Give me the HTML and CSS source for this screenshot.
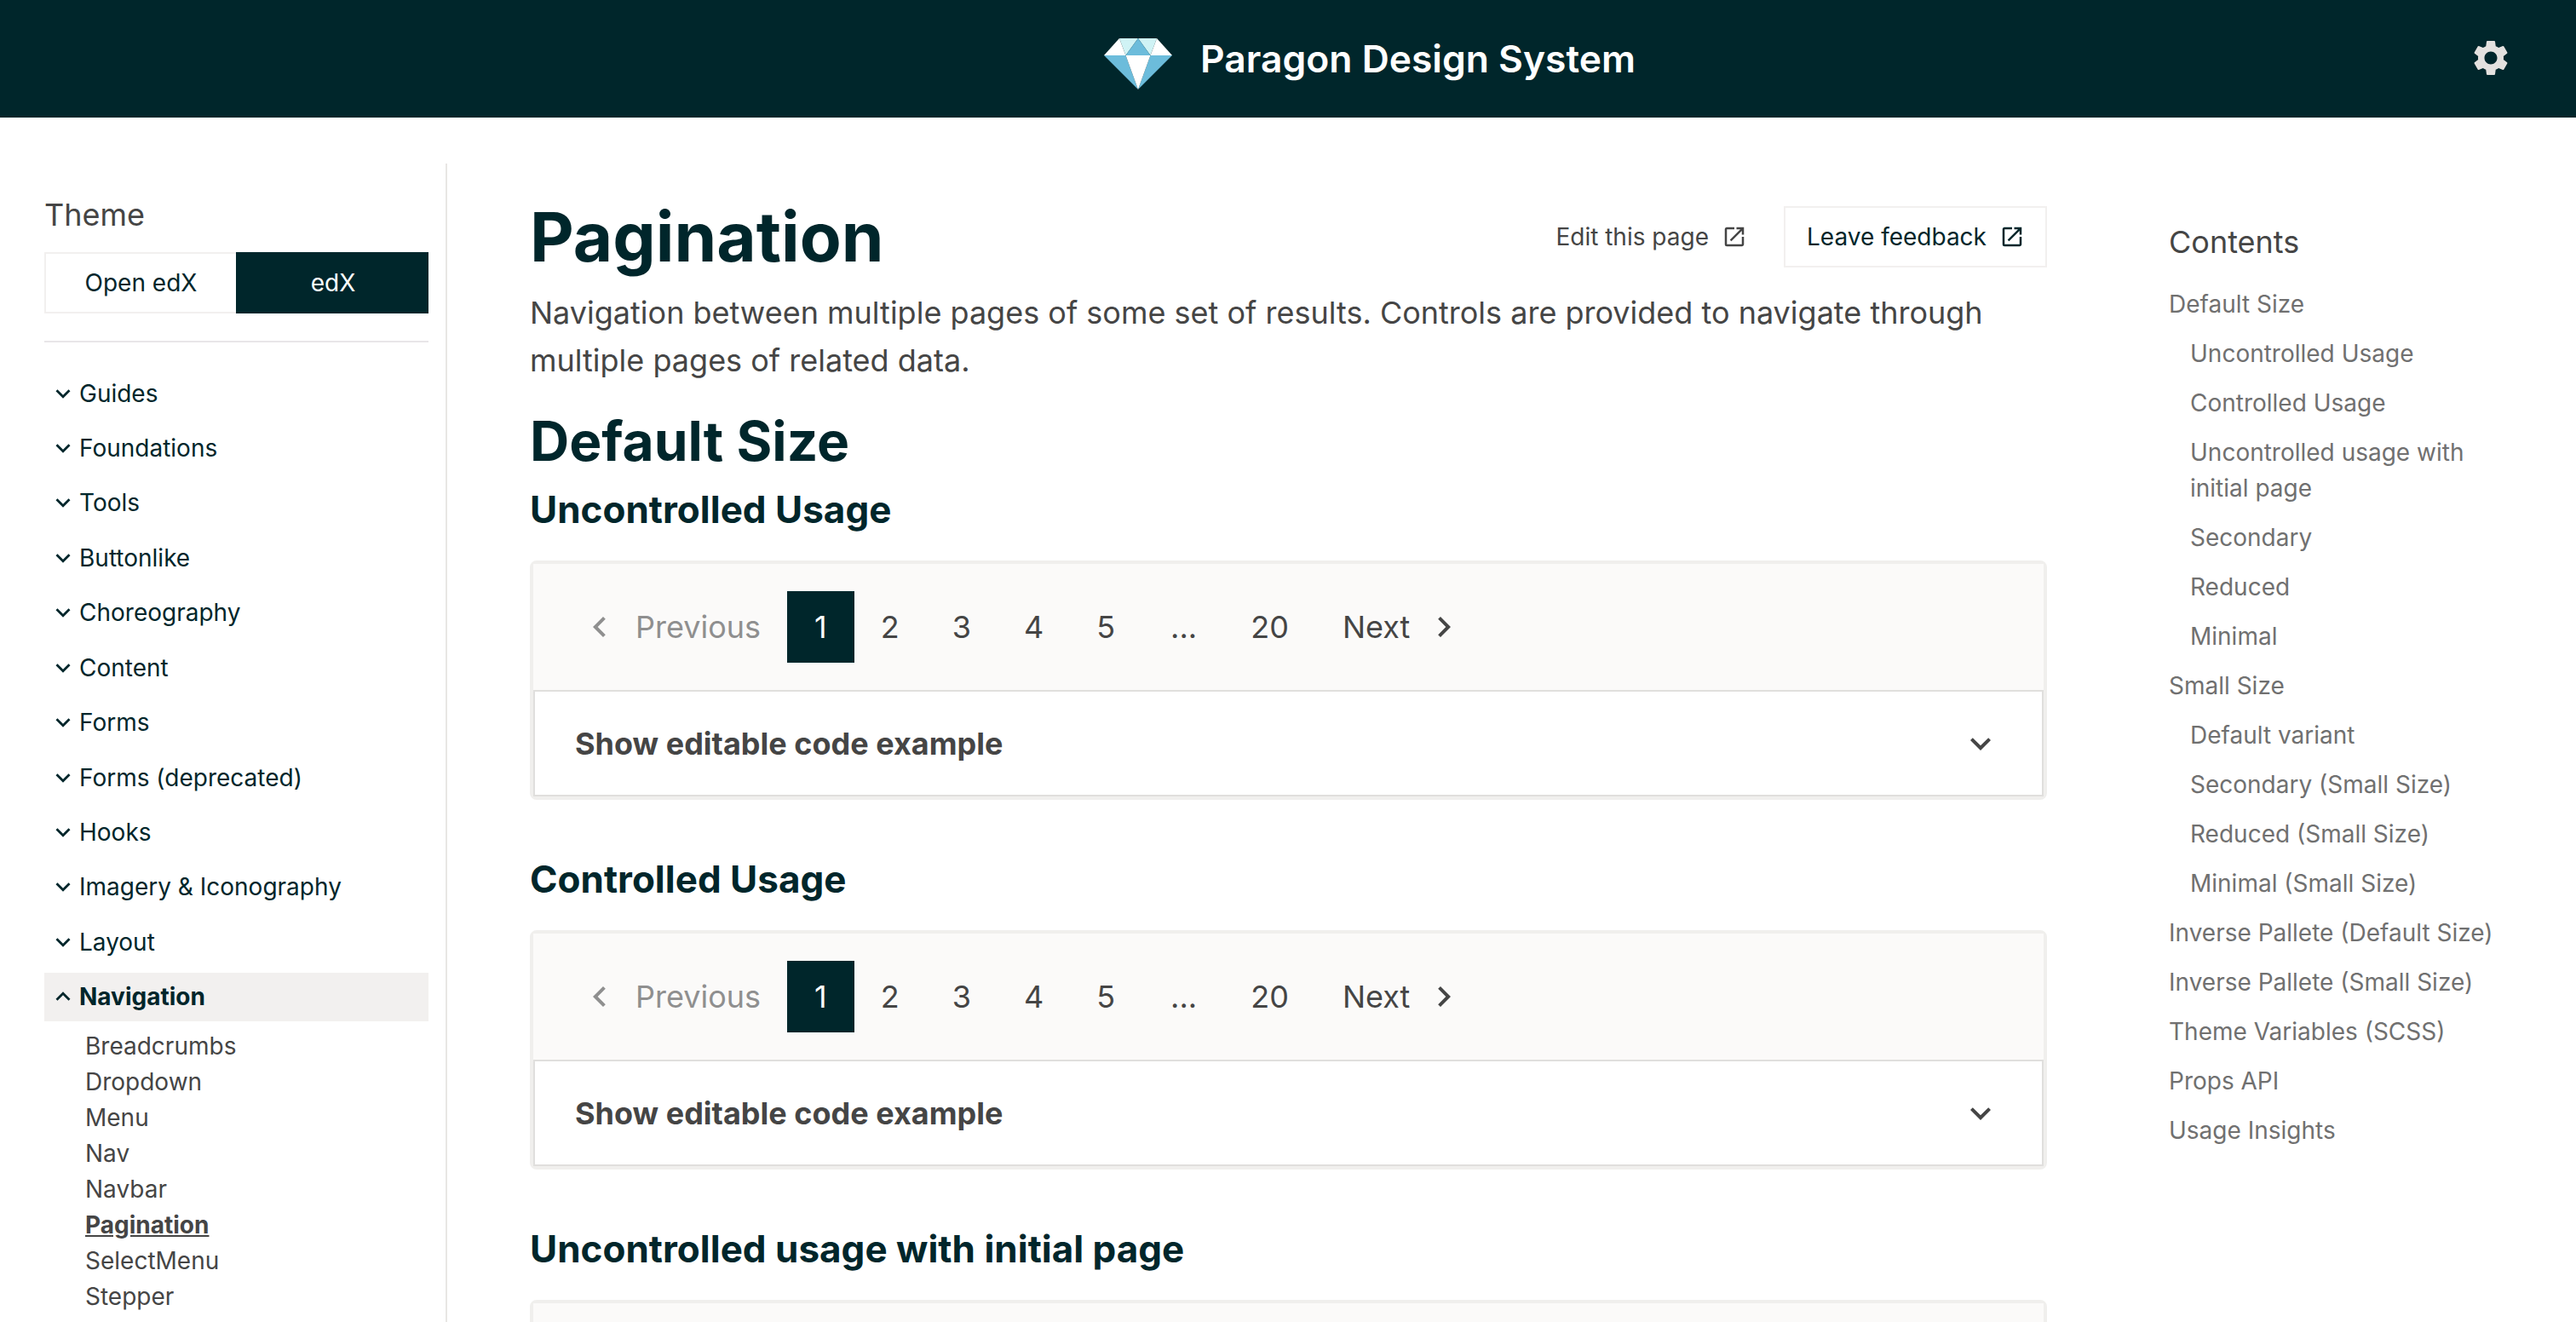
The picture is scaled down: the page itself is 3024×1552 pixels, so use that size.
FILE: index.html
```html
<!DOCTYPE html>
<html lang="en">

<head>
    <meta charset="UTF-8">
    <meta name="viewport" content="width=device-width, initial-scale=1.0">
    <title>Pagination - Paragon Design System</title>
    <link rel="stylesheet" href="styles.css">
</head>

<body>
    <svg class="icon-defs" width="0" height="0">
        <symbol id="i-down" viewBox="0 0 24 24"><path d="M16.59 8.59 12 13.17 7.41 8.59 6 10l6 6 6-6z"/></symbol>
        <symbol id="i-up" viewBox="0 0 24 24"><path d="M12 8l-6 6 1.41 1.41L12 10.83l4.59 4.58L18 14z"/></symbol>
        <symbol id="i-left" viewBox="0 0 24 24"><path d="M15.41 7.41 14 6l-6 6 6 6 1.41-1.41L10.83 12z"/></symbol>
        <symbol id="i-right" viewBox="0 0 24 24"><path d="M10 6 8.59 7.41 13.17 12l-4.58 4.59L10 18l6-6z"/></symbol>
        <symbol id="i-launch" viewBox="0 0 24 24"><path d="M19 19H5V5h7V3H5a2 2 0 0 0-2 2v14a2 2 0 0 0 2 2h14c1.1 0 2-.9 2-2v-7h-2v7zM14 3v2h3.59l-9.83 9.83 1.41 1.41L19 6.41V10h2V3h-7z"/></symbol>
    </svg>

    <header class="topbar">
        <div class="brand">
            <svg class="brand-logo" viewBox="0 0 80 60">
                <polygon points="18,0 40,0 25.5,20" fill="#d0f3f5"/>
                <polygon points="62,0 40,0 54.5,20" fill="#d0f3f5"/>
                <polygon points="40,0 25.5,20 54.5,20" fill="#6cbcdb"/>
                <polygon points="18,0 25.5,20 0,20" fill="#fff"/>
                <polygon points="62,0 54.5,20 80,20" fill="#fff"/>
                <polygon points="0,20 25.5,20 40,60" fill="#6cbcdb"/>
                <polygon points="80,20 54.5,20 40,60" fill="#6cbcdb"/>
                <polygon points="25.5,20 54.5,20 40,60" fill="#fff"/>
            </svg>
            <span class="brand-name">Paragon Design System</span>
        </div>
        <svg class="settings" viewBox="0 0 24 24"><path d="M19.14 12.94c.04-.3.06-.61.06-.94 0-.32-.02-.64-.07-.94l2.03-1.58a.49.49 0 0 0 .12-.61l-1.92-3.32a.488.488 0 0 0-.59-.22l-2.39.96c-.5-.38-1.03-.7-1.62-.94l-.36-2.54a.484.484 0 0 0-.48-.41h-3.84c-.24 0-.43.17-.47.41l-.36 2.54c-.59.24-1.13.57-1.62.94l-2.39-.96c-.22-.08-.47 0-.59.22L2.74 8.87c-.12.21-.08.47.12.61l2.03 1.58c-.05.3-.09.63-.09.94s.02.64.07.94l-2.03 1.58a.49.49 0 0 0-.12.61l1.92 3.32c.12.22.37.29.59.22l2.39-.96c.5.38 1.03.7 1.62.94l.36 2.54c.05.24.24.41.48.41h3.84c.24 0 .44-.17.47-.41l.36-2.54c.59-.24 1.13-.56 1.62-.94l2.39.96c.22.08.47 0 .59-.22l1.92-3.32c.12-.22.07-.47-.12-.61l-2.01-1.58zM12 15.6c-1.98 0-3.6-1.62-3.6-3.6s1.62-3.6 3.6-3.6 3.6 1.62 3.6 3.6-1.62 3.6-3.6 3.6z"/></svg>
    </header>

    <div class="layout">
        <aside class="sidebar">
            <h4 class="theme-title">Theme</h4>
            <div class="theme-switch">
                <button class="theme-btn">Open edX</button>
                <button class="theme-btn active">edX</button>
            </div>
            <hr class="divider">
            <nav class="side-nav">
                <a class="side-item"><svg class="side-chevron"><use href="#i-down"/></svg>Guides</a>
                <a class="side-item"><svg class="side-chevron"><use href="#i-down"/></svg>Foundations</a>
                <a class="side-item"><svg class="side-chevron"><use href="#i-down"/></svg>Tools</a>
                <a class="side-item"><svg class="side-chevron"><use href="#i-down"/></svg>Buttonlike</a>
                <a class="side-item"><svg class="side-chevron"><use href="#i-down"/></svg>Choreography</a>
                <a class="side-item"><svg class="side-chevron"><use href="#i-down"/></svg>Content</a>
                <a class="side-item"><svg class="side-chevron"><use href="#i-down"/></svg>Forms</a>
                <a class="side-item"><svg class="side-chevron"><use href="#i-down"/></svg>Forms (deprecated)</a>
                <a class="side-item"><svg class="side-chevron"><use href="#i-down"/></svg>Hooks</a>
                <a class="side-item"><svg class="side-chevron"><use href="#i-down"/></svg>Imagery &amp; Iconography</a>
                <a class="side-item"><svg class="side-chevron"><use href="#i-down"/></svg>Layout</a>
                <a class="side-item open"><svg class="side-chevron"><use href="#i-up"/></svg>Navigation</a>
            </nav>
            <ul class="side-sub">
                <li>Breadcrumbs</li>
                <li>Dropdown</li>
                <li>Menu</li>
                <li>Nav</li>
                <li>Navbar</li>
                <li class="current">Pagination</li>
                <li>SelectMenu</li>
                <li>Stepper</li>
            </ul>
        </aside>

        <main class="content">
            <div class="title-row">
                <h1 class="page-title">Pagination</h1>
                <div class="title-actions">
                    <a class="action-btn">Edit this page<svg class="action-icon"><use href="#i-launch"/></svg></a>
                    <a class="action-btn outlined">Leave feedback<svg class="action-icon"><use href="#i-launch"/></svg></a>
                </div>
            </div>
            <p class="lead">Navigation between multiple pages of some set of results. Controls are provided to navigate through multiple pages of related data.</p>

            <h2 class="section-title">Default Size</h2>

            <h3 class="example-title">Uncontrolled Usage</h3>
            <div class="example-card">
                <div class="example-preview">
                    <div class="pager">
                        <span class="page-btn prev"><svg class="page-chevron"><use href="#i-left"/></svg>Previous</span>
                        <span class="page-btn active">1</span>
                        <span class="page-btn">2</span>
                        <span class="page-btn">3</span>
                        <span class="page-btn">4</span>
                        <span class="page-btn">5</span>
                        <span class="page-btn ellipsis">...</span>
                        <span class="page-btn">20</span>
                        <span class="page-btn next">Next<svg class="page-chevron"><use href="#i-right"/></svg></span>
                    </div>
                </div>
                <div class="code-toggle">
                    <span>Show editable code example</span>
                    <svg class="toggle-chevron"><use href="#i-down"/></svg>
                </div>
            </div>

            <h3 class="example-title spaced">Controlled Usage</h3>
            <div class="example-card">
                <div class="example-preview">
                    <div class="pager">
                        <span class="page-btn prev"><svg class="page-chevron"><use href="#i-left"/></svg>Previous</span>
                        <span class="page-btn active">1</span>
                        <span class="page-btn">2</span>
                        <span class="page-btn">3</span>
                        <span class="page-btn">4</span>
                        <span class="page-btn">5</span>
                        <span class="page-btn ellipsis">...</span>
                        <span class="page-btn">20</span>
                        <span class="page-btn next">Next<svg class="page-chevron"><use href="#i-right"/></svg></span>
                    </div>
                </div>
                <div class="code-toggle">
                    <span>Show editable code example</span>
                    <svg class="toggle-chevron"><use href="#i-down"/></svg>
                </div>
            </div>

            <h3 class="example-title spaced">Uncontrolled usage with initial page</h3>
            <div class="example-card">
                <div class="example-preview"></div>
            </div>
        </main>

        <aside class="toc">
            <h4 class="toc-title">Contents</h4>
            <ul class="toc-list">
                <li>Default Size</li>
                <li class="sub">Uncontrolled Usage</li>
                <li class="sub">Controlled Usage</li>
                <li class="sub">Uncontrolled usage with initial page</li>
                <li class="sub">Secondary</li>
                <li class="sub">Reduced</li>
                <li class="sub">Minimal</li>
                <li>Small Size</li>
                <li class="sub">Default variant</li>
                <li class="sub">Secondary (Small Size)</li>
                <li class="sub">Reduced (Small Size)</li>
                <li class="sub">Minimal (Small Size)</li>
                <li>Inverse Pallete (Default Size)</li>
                <li>Inverse Pallete (Small Size)</li>
                <li>Theme Variables (SCSS)</li>
                <li>Props API</li>
                <li>Usage Insights</li>
            </ul>
        </aside>
    </div>
</body>

</html>
```

FILE: styles.css
```css
* {
    box-sizing: border-box;
}

body {
    font-family: Inter, "Noto Sans", sans-serif;
    margin: 0;
    height: 1552px;
    overflow: hidden;
    color: #454545;
    background: #fff;
}

.icon-defs {
    position: absolute;
}

svg {
    fill: currentColor;
    flex-shrink: 0;
}

/* Top bar */
.topbar {
    height: 138px;
    background: #00262b;
    display: flex;
    align-items: center;
    justify-content: center;
    position: relative;
}

.brand {
    display: flex;
    align-items: center;
    gap: 33px;
    margin-left: 192px;
}

.brand-logo {
    width: 80px;
    height: 60px;
    margin-top: 11px;
}

.brand-name {
    color: #fff;
    font-size: 44.4px;
    font-weight: 600;
    line-height: 60px;
}

.settings {
    position: absolute;
    right: 75px;
    top: 43px;
    width: 50px;
    height: 50px;
    color: #e4e1df;
}

/* Columns */
.layout {
    display: grid;
    grid-template-columns: 525px 1878px 1fr;
    height: 1414px;
}

/* Left sidebar */
.sidebar {
    margin-top: 54px;
    padding: 38px 20px 0 52px;
    border-right: 2px solid #e8e6e4;
    overflow: hidden;
}

.theme-title {
    margin: 0 0 22px;
    font-size: 36px;
    font-weight: 400;
    line-height: 44px;
}

.theme-switch {
    display: flex;
    height: 72px;
}

.theme-btn {
    flex: 0 0 225px;
    font-family: inherit;
    font-size: 28px;
    color: #00262b;
    background: #fff;
    border: 2px solid #f2f0ef;
    border-right: 0;
}

.theme-btn.active {
    flex-basis: 226px;
    background: #00262b;
    border-color: #00262b;
    color: #fff;
}

.divider {
    margin: 32px 0 31px;
    border: 0;
    border-top: 2px solid #e8e6e8;
}

.side-nav {
    display: flex;
    flex-direction: column;
    gap: 7.45px;
}

.side-item {
    height: 57px;
    display: flex;
    align-items: center;
    gap: 2px;
    padding-left: 5px;
    font-size: 28px;
    color: #00262b;
}

.side-item.open {
    background: #f2f0ef;
    font-weight: 700;
}

.side-chevron {
    width: 34px;
    height: 34px;
}

.side-sub {
    list-style: none;
    margin: 8px 0 0;
    padding: 0 0 0 48px;
    font-size: 28px;
    line-height: 42px;
}

.side-sub .current {
    font-weight: 700;
    text-decoration: underline;
}

/* Main column */
.content {
    padding: 92px 0 0 97px;
    overflow: hidden;
}

.title-row {
    display: flex;
    align-items: center;
    justify-content: space-between;
    height: 96px;
}

.page-title {
    margin: 0;
    font-size: 80px;
    font-weight: 700;
    line-height: 96px;
    color: #00262b;
}

.title-actions {
    display: flex;
    align-items: center;
    gap: 17px;
}

.action-btn {
    height: 72px;
    display: flex;
    align-items: center;
    gap: 15px;
    padding: 0 24px 0 25px;
    font-size: 28px;
    border: 2px solid transparent;
}

.action-btn.outlined {
    border-color: #f2f0ef;
    color: #00262b;
}

.action-icon {
    width: 30px;
    height: 30px;
}

.lead {
    margin: 13px 0 0;
    font-size: 36px;
    line-height: 56px;
}

.section-title {
    margin: 29px 0 0;
    font-size: 64px;
    font-weight: 700;
    line-height: 76px;
    color: #00262b;
}

.example-title {
    margin: 16px 0 34px;
    font-size: 44px;
    font-weight: 700;
    line-height: 52px;
    color: #00262b;
}

.example-title.spaced {
    margin-top: 67px;
}

.example-card {
    border: 4px solid #f0efed;
    border-radius: 8px;
    background: #fff;
}

.example-preview {
    height: 148px;
    padding: 32px 0 0 23px;
    background: #fbfaf9;
}

.pager {
    display: flex;
    height: 84px;
}

.page-btn {
    display: flex;
    align-items: center;
    padding: 0 31px;
    font-size: 36px;
}

.page-btn.active {
    padding: 0 32px;
    background: #00262b;
    color: #fff;
}

.page-btn.ellipsis {
    padding: 0 32px 0 34px;
}

.page-btn.prev {
    gap: 18px;
    color: #8f8f8f;
}

.page-btn.next {
    gap: 16px;
    padding-left: 32px;
}

.page-chevron {
    width: 48px;
    height: 48px;
}

.code-toggle {
    height: 125px;
    display: flex;
    align-items: center;
    justify-content: space-between;
    padding: 0 48px 0 47px;
    border: 2px solid #e0dfdd;
    font-size: 36px;
    font-weight: 700;
}

.toggle-chevron {
    width: 48px;
    height: 48px;
}

/* Right table of contents */
.toc {
    padding: 118px 70px 0 143px;
}

.toc-title {
    margin: 0 0 16px;
    font-size: 36px;
    font-weight: 400;
    line-height: 56px;
}

.toc-list {
    list-style: none;
    margin: 0;
    padding: 0;
    font-size: 28px;
    line-height: 42px;
    color: #707070;
}

.toc-list li {
    padding: 8px 0;
}

.toc-list .sub {
    padding-left: 25px;
}
```
